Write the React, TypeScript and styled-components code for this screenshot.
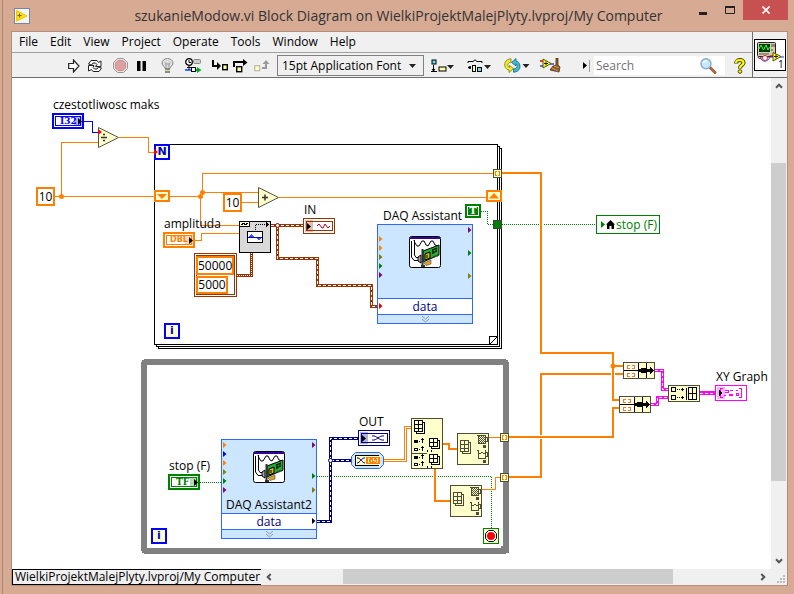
import React from "react";
import styled, { createGlobalStyle, css } from "styled-components";

const ORANGE = "#ff8000";
const BROWN = "#993300";
const NAVY = "#000080";
const PINK = "#ff00ff";
const GREEN = "#008000";
const CREAM = "#ffffcc";
const OLIVE = "#808000";
const PURPLE = "#800080";
const EDGE = "#4d4d33";
const CHROME = "#f0f0f0";

/* Scroll position of the diagram inside its pane. */
const ORIGIN_X = 12;
const ORIGIN_Y = 78;

const GlobalStyle = createGlobalStyle`
  *, *::before, *::after { box-sizing: border-box; }
  body {
    margin: 0;
    background: #d7aa93;
    color: #000;
    font: 12px/16px "Open Sans", "Noto Sans", sans-serif;
  }
  button, input, select {
    margin: 0;
    padding: 0;
    border: 0;
    background: none;
    color: inherit;
    font: inherit;
  }
  svg { display: block; flex: none; }
`;

/* ---------- window ---------- */

const Frame = styled.div`
  display: flex;
  flex-direction: column;
  min-height: 100vh;
  margin-left: 2px;
  padding: 0 6px 8px 8px;
  border-left: 1px solid #a98271;
`;

const TitleBar = styled.header`
  display: flex;
  align-items: center;
  height: 31px;
  padding-left: 3px;
`;

const Title = styled.h1`
  flex: 1;
  margin: 0;
  padding-left: 78px;
  text-align: center;
  font-size: 14px;
  line-height: 31px;
  font-weight: 400;
  color: #333;
  white-space: nowrap;
`;

const WindowButtons = styled.div`
  display: flex;
  align-self: flex-start;
`;

const WindowButton = styled.button<{ $close?: boolean }>`
  display: grid;
  place-items: center;
  width: ${(p) => (p.$close ? 45 : 27)}px;
  height: 20px;
  background: ${(p) => (p.$close ? "#c75050" : "transparent")};
`;

const Panel = styled.div`
  flex: 1;
  display: flex;
  flex-direction: column;
  border: 1px solid #b48e7d;
  background: ${CHROME};
`;

const Head = styled.div`
  display: flex;
  border-bottom: 1px solid #6e6e6e;
`;

const Bars = styled.div`
  flex: 1;
  min-width: 0;
`;

const MenuBar = styled.nav`
  display: flex;
  height: 20px;
  padding-left: 1px;
`;

const MenuItem = styled.button`
  padding: 0 6px 1px;
  line-height: 18px;
`;

const ToolBar = styled.div`
  display: flex;
  align-items: center;
  gap: 5px;
  height: 25px;
  padding: 1px 2px 0 51px;
  border-top: 1px solid #a0a0a0;
`;

const ToolGroup = styled.div<{ $gap?: number }>`
  display: flex;
  align-items: center;
  gap: ${(p) => p.$gap ?? 0}px;
`;

const ToolButton = styled.button<{ $wide?: boolean }>`
  display: grid;
  place-items: center;
  width: ${(p) => (p.$wide ? 27 : 21)}px;
  height: 20px;
`;

const FontBox = styled.label`
  position: relative;
  display: flex;
  align-items: center;
  width: 147px;
  height: 21px;
  border: 1px solid #808080;

  svg {
    position: absolute;
    right: 7px;
    pointer-events: none;
  }
`;

const FontSelect = styled.select`
  appearance: none;
  width: 100%;
  height: 100%;
  padding-left: 4px;
  line-height: 18px;
`;

const SearchGroup = styled.div`
  display: flex;
  align-items: center;
  margin-left: auto;
`;

const Divider = styled.span`
  width: 1px;
  height: 12px;
  margin: 0 4px 0 2px;
  background: #a0a0a0;
`;

const SearchBox = styled.label`
  display: flex;
  align-items: center;
  width: 131px;
  height: 19px;
  margin-right: 4px;
  padding: 0 8px 0 2px;
  background: #fff;
`;

const SearchInput = styled.input`
  flex: 1;
  min-width: 0;
  outline: 0;
  &::placeholder { color: #707070; opacity: 1; }
`;

const IconPane = styled.div`
  display: grid;
  place-items: center;
  width: 35px;
  border-left: 1px solid #6e6e6e;
`;

const Body = styled.div`
  flex: 1;
  display: flex;
`;

const Canvas = styled.main`
  position: relative;
  flex: 1;
  min-width: 0;
  min-height: 490px;
  overflow: hidden;
  background: #fff;
`;

const Scroll = styled.div<{ $vertical?: boolean }>`
  display: flex;
  flex-direction: ${(p) => (p.$vertical ? "column" : "row")};
  flex: ${(p) => (p.$vertical ? "none" : "1")};
  width: ${(p) => (p.$vertical ? "16px" : "auto")};
  padding: ${(p) => (p.$vertical ? "0 1px 0 0" : "0 0 1px")};
`;

const ScrollButton = styled.button`
  display: grid;
  place-items: center;
  width: 16px;
  height: 16px;
`;

const Space = styled.span<{ $part: number }>`
  flex: ${(p) => p.$part};
`;

const Thumb = styled.div<{ $part: number }>`
  flex: ${(p) => p.$part};
  background: #cdcdcd;
`;

const Foot = styled.footer`
  display: flex;
  height: 16px;
`;

const ProjectPath = styled.div`
  flex: none;
  padding: 0 1px 0 2px;
  border: 1px solid #000;
  border-right: 0;
  line-height: 13px;
  white-space: nowrap;
`;

/* ---------- diagram ---------- */

interface Place {
  $x: number;
  $y: number;
  $w?: number;
  $h?: number;
}

const placed = css<Place>`
  position: absolute;
  left: ${(p) => p.$x - ORIGIN_X}px;
  top: ${(p) => p.$y - ORIGIN_Y}px;
  width: ${(p) => (p.$w ? `${p.$w}px` : "auto")};
  height: ${(p) => (p.$h ? `${p.$h}px` : "auto")};
`;

const Layer = styled.svg`
  position: absolute;
  left: 0;
  top: 0;
`;

const Picture = styled.svg<Place>`
  ${placed}
`;

const Caption = styled.span<Place>`
  ${placed}
  line-height: 16px;
  white-space: nowrap;
`;

const Constant = styled.div<Place>`
  ${placed}
  display: grid;
  place-items: center;
  border: 2px solid ${ORANGE};
  background: #fff;
  line-height: 14px;
`;

const Cluster = styled.div<Place>`
  ${placed}
  border: 1px solid ${BROWN};
  background: #fff;
  outline: 1px solid ${BROWN};
  outline-offset: -3px;
`;

const TerminalBox = styled.div<Place & { $c: string; $thin?: boolean }>`
  ${placed}
  display: flex;
  padding: ${(p) => (p.$thin ? 2 : 1)}px;
  border: ${(p) => (p.$thin ? 1 : 2)}px solid ${(p) => p.$c};
  background: #fff;
  color: ${(p) => p.$c};
`;

const TerminalInner = styled.div<{ $serif?: boolean }>`
  flex: 1;
  display: flex;
  align-items: center;
  padding-left: ${(p) => (p.$serif ? 4 : 3)}px;
  border: 1px solid currentColor;
  font: 700 ${(p) => (p.$serif ? 9 : 8)}px/8px
    ${(p) => (p.$serif ? '"DejaVu Serif", serif' : '"DejaVu Sans", sans-serif')};
`;

const TerminalShade = styled.span<{ $left?: boolean }>`
  position: absolute;
  top: 1px;
  bottom: 1px;
  ${(p) => (p.$left ? "left: 1px" : "right: 0")};
  width: 8px;
  display: grid;
  place-items: center;
  justify-content: ${(p) => (p.$left ? "center" : "end")};

  &::before {
    content: "";
    position: absolute;
    inset: 0;
    background: currentColor;
    opacity: 0.3;
  }

  svg { position: relative; }
`;

const ExpressNode = styled.section<Place>`
  ${placed}
  display: flex;
  flex-direction: column;
  border: 1px solid #3366ff;
  background: #cce6ff;
`;

const ExpressTop = styled.div`
  flex: 1;
  display: flex;
  flex-direction: column;
  align-items: center;
  justify-content: space-between;
  padding-top: 11px;
`;

const ExpressRow = styled.div`
  height: 17px;
  border: solid #3366ff;
  border-width: 1px 0;
  background: #fff;
  color: ${NAVY};
  text-align: center;
  line-height: 16px;
`;

const ExpressFoot = styled.div`
  display: grid;
  place-items: center;
  height: 8px;
`;

const Pins = styled.svg`
  position: absolute;
  left: 0;
  top: 0;
`;

const Reference = styled.div<Place>`
  ${placed}
  display: flex;
  align-items: center;
  gap: 1px;
  padding-left: 4px;
  border: 1px solid ${GREEN};
  background: #fff;
  color: ${GREEN};
  white-space: nowrap;
`;

const LoopTerminal = styled.div<Place>`
  ${placed}
  display: grid;
  place-items: center;
  border: 2px solid #0000ff;
  background: ${CREAM};
  color: #0000cc;
  font: 700 11px/12px "DejaVu Sans", sans-serif;
`;

const TrueConstant = styled.div<Place>`
  ${placed}
  display: grid;
  place-items: center;
  border: 2px solid ${GREEN};
  outline: 1px solid #fff;
  outline-offset: -3px;
  background: ${GREEN};
  color: #fff;
  font: 700 10px/10px "DejaVu Serif", serif;
`;

/* ---------- small drawings ---------- */

const DownArrow = () => (
  <svg width="7" height="4" viewBox="0 0 7 4">
    <path d="M0 0H7L3.5 4Z" fill="#222" />
  </svg>
);

const PinArrow = ({ color = "#000" }: { color?: string }) => (
  <svg width="4" height="7" viewBox="0 0 4 7">
    <path d="M0 0L4 3.5L0 7Z" fill={color} />
  </svg>
);

const Chevron = ({ turn }: { turn: number }) => (
  <svg width="8" height="8" viewBox="0 0 8 8">
    <path d="M1 5.7L4 2.7L7 5.7" fill="none" stroke="#555" strokeWidth="2" transform={`rotate(${turn} 4 4)`} />
  </svg>
);

const DaqPicture = () => (
  <svg width="32" height="32" viewBox="0 0 32 32">
    <rect x=".5" y=".5" width="31" height="31" rx="2" fill="#fff" stroke="#000" />
    <path d="M1 2H31" stroke="#330099" strokeWidth="2" />
    <path d="M5 4L6 7L8 10H10L13 5H15L17 9L19 10L22 5H24L26 9L29 10" fill="none" stroke="#000" />
    <path d="M2.5 5V21L5 24.5H10M5.5 4V19L7 21.5H10" fill="none" stroke="#000" />
    <path d="M9 21L12 19V27L9 25Z" fill="#aaa" stroke="#000" />
    <path d="M14 15L30 9V19L14 26Z" fill="#22aa33" stroke="#000" />
    <path d="M13.5 13V30M12 30H16" stroke="#333" strokeWidth="2" />
    <path d="M16 18L21 16V22L16 24Z" fill="#d8b020" stroke="#000" />
    <path d="M18 19V22" stroke="#000" />
    <path d="M23 14L28 12M23 17L28 15M24 13V18M27 12V16" stroke="#000" />
    <path d="M15 27L22 24V28L17 29.500Z" fill="#e0a020" stroke="#333" strokeWidth=".5" />
    <path d="M24 21L30 19" stroke="#444" strokeDasharray="1 1" strokeWidth="2" />
  </svg>
);

const ChevronPair = () => (
  <svg width="9" height="7" viewBox="0 0 9 7">
    <path d="M1 0L4.500 3L8 0M1 3L4.500 6L8 3" fill="none" stroke="#8899aa" />
  </svg>
);

type Pin = [number, string];

const NodePins = ({ left, right, height }: { left: Pin[]; right: Pin[]; height: number }) => (
  <Pins width="94" height={height} viewBox={`0 0 94 ${height}`}>
    {left.map(([y, c]) => (
      <path key={`l${y}`} d={`M1 ${y - 3}L4.500 ${y}L1 ${y + 3}Z`} fill={c} />
    ))}
    {right.map(([y, c]) => (
      <path key={`r${y}`} d={`M90 ${y - 3}L93.500 ${y}L90 ${y + 3}Z`} fill={c} />
    ))}
  </Pins>
);

const Wire = ({ d, c, w = 1 }: { d: string; c: string; w?: number }) => (
  <path d={d} fill="none" stroke={c} strokeWidth={w} />
);

const BandWire = ({ d, c, w = 3, dash = "2 2" }: { d: string; c: string; w?: number; dash?: string }) => (
  <>
    <path d={d} fill="none" stroke={c} strokeWidth={w} />
    <path d={d} fill="none" stroke="#fff" strokeDasharray={dash} />
  </>
);

const Grid3 = ({ x, y, c = "#000" }: { x: number; y: number; c?: string }) => (
  <path
    d={`M${x + 0.5} ${y + 0.5}h8v11h-8ZM${x + 4.5} ${y + 0.5}v11M${x + 0.5} ${y + 4.5}h8M${x + 0.5} ${y + 8.5}h8M${x + 8.5} ${y + 2.5}h2v11h-8v-2`}
    fill="none"
    stroke={c}
  />
);

const Grid2 = ({ x, y }: { x: number; y: number }) => (
  <path
    d={`M${x + 0.5} ${y + 0.5}h8v8h-8ZM${x + 4.5} ${y + 0.5}v8M${x + 0.5} ${y + 4.5}h8M${x + 8.5} ${y + 2.5}h2v8h-8v-2`}
    fill="none"
    stroke="#000"
  />
);

const BracketTunnel = ({ x, y }: { x: number; y: number }) => (
  <Picture $x={x} $y={y} $w={9} $h={9} viewBox="0 0 9 9" shapeRendering="crispEdges">
    <rect x=".5" y=".5" width="8" height="8" fill={CREAM} stroke={EDGE} />
    <path d="M4 2.500H2.500V6.500H4M5 2.500H6.500V6.500H5" fill="none" stroke={ORANGE} />
  </Picture>
);

const ShiftRegister = ({ x, y, up }: { x: number; y: number; up?: boolean }) => (
  <Picture $x={x} $y={y} $w={16} $h={12} viewBox="0 0 16 12">
    <rect x="1" y="1" width="14" height="10" fill={CREAM} stroke={ORANGE} strokeWidth="2" />
    <path d={up ? "M3 8.500H13L8 3Z" : "M3 4H13L8 9Z"} fill={ORANGE} />
  </Picture>
);

const Operator = ({ x, y, sign }: { x: number; y: number; sign: "add" | "divide" }) => (
  <Picture $x={x} $y={y} $w={21} $h={21} viewBox="0 0 21 21">
    <path d="M.5 .5L20.500 10.500L.5 20.500Z" fill={CREAM} stroke="#555540" />
    {sign === "add" ? (
      <path d="M4 10.500H10M7 7.500V13.500" stroke="#333" strokeWidth="1.500" />
    ) : (
      <path d="M3 10.500H9M5 7.500H7M5 13.500H7" stroke="#333" strokeWidth="1.500" />
    )}
  </Picture>
);

const Bundle = ({ x, y }: { x: number; y: number }) => (
  <Picture $x={x} $y={y} $w={32} $h={17} viewBox="0 0 32 17" shapeRendering="crispEdges">
    <rect x=".5" y=".5" width="31" height="16" fill={CREAM} stroke={EDGE} />
    <rect x="1" y="1" width="14" height="15" fill="#fff" />
    <path d="M1 8.500H15M15.500 1V16M23.500 1V16" stroke="#000" fill="none" />
    <path d="M7 3.500H4.500V6.500H7M9 3.500H11.500V6.500H9M7 11.500H4.500V14.500H7M9 11.500H11.500V14.500H9" stroke={ORANGE} fill="none" />
    <path d="M16 7H18V6H23V7H27V5L31 8.500L27 12V10H23V11H18V10H16Z" fill="#000" />
  </Picture>
);

const IndexNode = ({ x, y }: { x: number; y: number }) => (
  <Picture $x={x} $y={y} $w={32} $h={32} viewBox="0 0 32 32" shapeRendering="crispEdges">
    <rect x=".5" y=".5" width="31" height="31" fill={CREAM} stroke={EDGE} />
    <Grid3 x={3} y={7} c={EDGE} />
    <path d="M20 2.500H28.500V10.500H21.500V3M28.500 4.500H30.500V8.500H28.500" fill="none" stroke={EDGE} />
    <path d="M22 3.500H28M22 5.500H28M22 7.500H28M22 9.500H28" stroke={EDGE} strokeDasharray="1 1" />
    <path d="M23 4.500H28M23 6.500H28M23 8.500H28" stroke={EDGE} strokeDasharray="1 1" />
    <path d="M20 17.500H22M21.500 18V25.500H28.500V17M28.500 19.500H30.500V23.500H28.500M22 20.500H24M24 19.500H26M26 20.500H28" fill="none" stroke={EDGE} />
    <path d="M26 12H29V15H26ZM26 27H29V30H26Z" fill={EDGE} />
  </Picture>
);

interface TerminalProps {
  x: number;
  y: number;
  c: string;
  text?: string;
  serif?: boolean;
  indicator?: boolean;
  children?: React.ReactNode;
}

const Terminal = ({ x, y, c, text, serif, indicator, children }: TerminalProps) => (
  <TerminalBox $x={x} $y={y} $w={32} $h={16} $c={c} $thin={indicator}>
    <TerminalInner $serif={serif}>
      {text}
      {children}
    </TerminalInner>
    <TerminalShade $left={indicator}>
      <PinArrow />
    </TerminalShade>
  </TerminalBox>
);

/* ---------- diagram wiring ---------- */

const Wiring = () => (
  <Layer width="759" height="490" viewBox={`${ORIGIN_X} ${ORIGIN_Y} 759 490`} shapeRendering="crispEdges">
    {/* for loop, stacked pages */}
    <path d="M158.500 346V348.500H501.500V148.500H500M156.500 344V346.500H499.500V146.500H498" fill="none" stroke="#000" />
    <rect x="154.500" y="144.500" width="343" height="200" fill="#fff" stroke="#000" />
    <path d="M489.500 344V336.500H497M490 344L497 337" fill="none" stroke="#000" />
    {/* while loop */}
    <rect x="144" y="362" width="362" height="189" rx="2" fill="none" stroke="#808080" strokeWidth="6" />
    <path d="M501 546H509V553H506V551H501Z" fill="#808080" />

    <Wire c="#0000ff" d="M84 121.500H92.500V132.500H98" />
    <Wire c={ORANGE} d="M119 137.500H148.500V152.500H155" />
    <Wire c={ORANGE} d="M55 196.500H201M61.500 196V142.500H98M200.500 196V225.500H239" />
    <Wire c={ORANGE} d="M202.500 192V173.500H493M202 192.500H258M242 202.500H258M279 197.500H487" />
    <Wire c={ORANGE} d="M195 240.500H201.500V233.500H239" />
    <g fill={ORANGE} shapeRendering="auto">
      <circle cx="61.500" cy="196.500" r="2.500" />
      <circle cx="200.500" cy="196.500" r="2.500" />
      <circle cx="202.500" cy="192.500" r="2.500" />
    </g>

    <BandWire c={BROWN} d="M237 275.500H251.500V253" dash="1 1" />
    <BandWire c={BROWN} d="M271 225.500H303" dash="3 2" />
    <BandWire c={BROWN} d="M277.500 226V258.500H317.500V285.500H371.500V306.500H378" dash="3 2" />
    <circle cx="277.500" cy="225.500" r="2" fill="#fff" stroke="#990000" shapeRendering="auto" />

    <g strokeDasharray="1 1">
      <Wire c={GREEN} d="M481 211.500H487.500V224.500H493M502 224.500H539M544 224.500H596" />
      <Wire c={GREEN} d="M200 482.500H221M317 476.500H328M334 476.500H433M438 476.500H491.500V528" />
    </g>

    <Wire c={ORANGE} w={2} d="M502 173H541V353H613V400H619M613 366H623" />
    <Wire c={ORANGE} w={2} d="M509 437H613V408H619M509 477H541V439M541 435V374H611M615 374H623" />
    <circle cx="613" cy="366" r="2.500" fill={ORANGE} shapeRendering="auto" />
    <Wire c={ORANGE} w={2} d="M443 444H449V449H457M435 469V501H450" />
    <Wire c={ORANGE} d="M489 437.500H500M482 489.500H495.500V477.500H500" />
    <Wire c={ORANGE} w={3} d="M384 460.500H405.500V427.500H411" />
    <Wire c="#fff" d="M384 460.500H405.500V427.500H411" />

    <BandWire c={NAVY} d="M317 521.500H330.500V438.500H358M331 460.500H352" dash="3 2" />
    <circle cx="330.500" cy="460.500" r="2" fill="#fff" stroke={NAVY} shapeRendering="auto" />

    <BandWire c={PINK} d="M655 370.500H662.500V389.500H668M651 404.500H657.500V397.500H668" dash="3 2" />
    <BandWire c={PINK} w={4} d="M700 393H715" dash="3 2" />
  </Layer>
);

/* ---------- toolbar drawings ---------- */

const RunIcon = () => (
  <svg width="12" height="14" viewBox="0 0 12 14">
    <path d="M.7 4.500H5.500V1L11 7L5.500 13V9.500H.7Z" fill="#fff" stroke="#222" strokeWidth="1.200" />
  </svg>
);

const RunLoopIcon = () => (
  <svg width="16" height="14" viewBox="0 0 16 14">
    <path d="M1.500 5L4 1.500H10L11.500 3.500L14 2V7.500H8.500L10 5.500L8.500 4H6L4.500 6Z" fill="#fff" stroke="#222" />
    <path d="M14.500 9L12 12.500H6L4.500 10.500L1.500 12V6.500H7L6 8.500L7.500 10H10L11.500 8Z" fill="#fff" stroke="#222" />
  </svg>
);

const AbortIcon = () => (
  <svg width="15" height="15" viewBox="0 0 15 15">
    <path d="M4.500 .5H10.500L14.500 4.500V10.500L10.500 14.500H4.500L.5 10.500V4.500Z" fill="#e8e0e0" stroke="#999" />
    <path d="M5 2.500H10L12.500 5V10L10 12.500H5L2.500 10V5Z" fill="#dda0a0" stroke="#d09090" />
  </svg>
);

const PauseIcon = () => (
  <svg width="9" height="10" viewBox="0 0 9 10">
    <path d="M0 0H3.500V10H0ZM5.500 0H9V10H5.500Z" fill="#000" />
  </svg>
);

const BulbIcon = () => (
  <svg width="13" height="16" viewBox="0 0 13 16">
    <path d="M4 10.500C4 8.500 1 8 1 5A5.500 4.500 0 0 1 12 5C12 8 9 8.500 9 10.500Z" fill="#ddd" stroke="#888" />
    <path d="M5 10V6L4 4.500M8 10V6L9 4.500M5 6H8" fill="none" stroke="#999" />
    <path d="M4 11H9V15H4Z" fill="#8c8c80" />
    <path d="M4 12.500H9" stroke="#e0d890" />
  </svg>
);

const RetainIcon = () => (
  <svg width="17" height="15" viewBox="0 0 17 15">
    <circle cx="4" cy="4" r="3.300" fill="#fff" stroke="#000" strokeWidth="1.300" />
    <path d="M4 2V4.500H6M4 7.500V12M2 9.500H6" fill="none" stroke="#000" />
    <rect x="8.500" y="1.500" width="7" height="4" rx="1" fill="#ccc" stroke="#888" />
    <path d="M0 12H6" stroke="#0044ff" strokeWidth="1.500" />
    <rect x="6.500" y="9.500" width="4" height="4" fill="#fff" stroke="#000" />
    <path d="M11 11H12V9L16.500 12L12 15V13H11Z" fill="#00aa22" />
  </svg>
);

const StepIntoIcon = () => (
  <svg width="16" height="13" viewBox="0 0 16 13">
    <path d="M1 1V7H6" fill="none" stroke="#000" strokeWidth="2" />
    <path d="M5 3L9 7L5 11Z" fill="#000" />
    <rect x="10.700" y="5.700" width="4.600" height="5" fill="#ffff99" stroke="#000" strokeWidth="1.400" />
  </svg>
);

const StepOverIcon = () => (
  <svg width="15" height="14" viewBox="0 0 15 14">
    <path d="M1 8V3H11" fill="none" stroke="#000" strokeWidth="2" />
    <path d="M10 0L14.500 3.500L10 7Z" fill="#000" />
    <rect x="3.700" y="7.700" width="5" height="5" fill="#ffff99" stroke="#000" strokeWidth="1.400" />
  </svg>
);

const StepOutIcon = () => (
  <svg width="16" height="13" viewBox="0 0 16 13">
    <rect x=".7" y="6.700" width="5" height="5" fill="#ffffcc" stroke="#bbb9a0" strokeWidth="1.200" />
    <path d="M8 9H12V4" fill="none" stroke="#999" strokeWidth="2" />
    <path d="M8.500 5L12 1L15.500 5Z" fill="#999" />
  </svg>
);

const AlignIcon = () => (
  <svg width="24" height="14" viewBox="0 0 24 14">
    <rect x="1" y="1" width="4" height="4" fill="#66ddee" stroke="#000" />
    <path d="M2.500 6V12M1 10L2.500 12L4 10M0 12.500H6" fill="none" stroke="#000" />
    <rect x="8" y="8" width="7" height="4" fill="#ffff99" stroke="#000" />
    <path d="M16 6H23L19.500 10Z" fill="#222" />
  </svg>
);

const DistributeIcon = () => (
  <svg width="25" height="14" viewBox="0 0 25 14">
    <path d="M1 4V2.500H6L8 .8L10 2.500H15V4" fill="none" stroke="#000" />
    <path d="M1 8.500H4M3 7V10" stroke="#000" strokeWidth="1.500" />
    <rect x="5.500" y="6.500" width="3" height="6" fill="#ffff99" stroke="#000" />
    <rect x="10.500" y="8.500" width="4" height="4" fill="#66ddee" stroke="#000" />
    <path d="M17 6H24L20.500 10Z" fill="#222" />
  </svg>
);

const ReorderIcon = () => (
  <svg width="26" height="15" viewBox="0 0 26 15">
    <path d="M7 .8C-1 1 -1 11 5 12V14.500L9.500 10.500L5.500 7.500V9.500C3 8 3 5 7 4Z" fill="#f2ec30" stroke="#777700" strokeWidth=".8" />
    <path d="M9.500 14.200C18 14 17.500 4 12 3V.5L7.500 4.500L12 8V5.800C14 7 14 10 9.500 11Z" fill="#44b8cc" stroke="#116688" strokeWidth=".8" />
    <path d="M18.500 6H25.500L22 10Z" fill="#222" />
  </svg>
);

const CleanupIcon = () => (
  <svg width="22" height="15" viewBox="0 0 22 15">
    <path d="M0 3H3" stroke="#dd0000" strokeWidth="1.500" />
    <path d="M0 8H3M10 6H14" stroke="#3344dd" strokeWidth="1.500" />
    <path d="M3 1L11 5.500L3 10Z" fill="#ffff33" stroke="#665500" />
    <path d="M4 5.500H8M6 3.500V7.500" stroke="#222" />
    <path d="M16 0H18V7L20 9L19 14L10 12L13 8L16 7Z" fill="#8b5a2b" stroke="#553311" strokeWidth=".8" />
    <path d="M12 10L18 13M14 8L19 10" stroke="#d0a060" />
  </svg>
);

const LensIcon = () => (
  <svg width="17" height="16" viewBox="0 0 17 16">
    <path d="M10 9.500L15 14.500" stroke="#a8643c" strokeWidth="3" strokeLinecap="round" />
    <circle cx="6" cy="5.800" r="5" fill="#c8e8fc" stroke="#86a8cc" strokeWidth="1.400" />
    <path d="M3 5Q4 2.500 7 3" fill="none" stroke="#fff" strokeWidth="1.500" />
  </svg>
);

const HelpIcon = () => (
  <svg width="12" height="16" viewBox="0 0 12 16">
    <path d="M2 5.500C2 1 10 1 9.500 5C9.200 7.500 6 7 6 10.500" fill="none" stroke="#444400" strokeWidth="4" />
    <path d="M2 5C2 1 10 1 9.500 5C9.200 7.500 6 7 6 10" fill="none" stroke="#ffff00" strokeWidth="2.200" />
    <circle cx="6" cy="13.500" r="1.800" fill="#ffff00" stroke="#444400" />
  </svg>
);

const ViIcon = () => (
  <svg width="32" height="32" viewBox="0 0 32 32">
    <rect x=".5" y=".5" width="31" height="31" fill="#fff" stroke="#000" />
    <rect x="3.500" y="3.500" width="18" height="14" rx="1" fill="#d5ceb0" stroke="#222" />
    <rect x="5" y="5" width="11" height="8" fill="#003c00" />
    <path d="M5 10L7 6L9.500 11L12 6L14 11L15.500 8" fill="none" stroke="#33ff44" />
    <path d="M18 5V8M20 5V8M18 10V12" stroke="#444" />
    <path d="M5 15H15" stroke="#555" />
    <path d="M4 18C5 22 8 17 11 19S15 15 19 17" fill="none" stroke="#dd0000" />
    <path d="M6 18C8 24 14 23 16 18H19M26 18H30" fill="none" stroke="#2233cc" />
    <circle cx="11" cy="19" r="2.500" fill="#fff" stroke="#cc3333" />
    <path d="M19 13.500L27 17.500L19 22Z" fill="#ffff33" stroke="#555500" />
    <path d="M20 17.500H24M22 15.500V19.500" stroke="#222" />
    <text x="24" y="29" fontFamily="Open Sans, sans-serif" fontSize="10">1</text>
  </svg>
);

const LabviewIcon = () => (
  <svg width="16" height="16" viewBox="0 0 16 16">
    <rect x=".5" y=".5" width="15" height="15" fill="#f4f4f4" stroke="#788898" />
    <path d="M2.500 2.500L13 8L2.500 13Z" fill="#ffe000" stroke="#f0c800" />
    <path d="M3.500 7.500H7.500M5.500 5.500V9.500" stroke="#666" />
  </svg>
);

/* ---------- page ---------- */

const MENUS = ["File", "Edit", "View", "Project", "Operate", "Tools", "Window", "Help"];

const TOOL_GROUPS: { name: string; icon: React.ReactNode }[][] = [
  [
    { name: "Run", icon: <RunIcon /> },
    { name: "Run continuously", icon: <RunLoopIcon /> },
  ],
  [
    { name: "Abort", icon: <AbortIcon /> },
    { name: "Pause", icon: <PauseIcon /> },
  ],
  [{ name: "Highlight execution", icon: <BulbIcon /> }],
  [{ name: "Retain wire values", icon: <RetainIcon /> }],
  [
    { name: "Step into", icon: <StepIntoIcon /> },
    { name: "Step over", icon: <StepOverIcon /> },
    { name: "Step out", icon: <StepOutIcon /> },
  ],
];

const ARRANGE = [
  { name: "Align objects", wide: true, icon: <AlignIcon /> },
  { name: "Distribute objects", wide: true, icon: <DistributeIcon /> },
  { name: "Reorder", wide: true, icon: <ReorderIcon /> },
  { name: "Clean up diagram", wide: false, icon: <CleanupIcon /> },
];

const Diagram = () => (
  <Canvas>
    <Wiring />

    <Caption $x={53} $y={97}>czestotliwosc maks</Caption>
    <Terminal x={52} y={113} c="#0000ff" text="I32" serif />
    <Operator x={98} y={127} sign="divide" />
    <LoopTerminal $x={154} $y={144} $w={16} $h={16}>N</LoopTerminal>
    <Picture $x={98} $y={129} $w={4} $h={6} viewBox="0 0 4 6">
      <path d="M0 0L4 3L0 6Z" fill="red" />
    </Picture>
    <Picture $x={154} $y={149} $w={4} $h={6} viewBox="0 0 4 6">
      <path d="M0 0L4 3L0 6Z" fill="red" />
    </Picture>
    <Constant $x={36} $y={187} $w={19} $h={19}>10</Constant>
    <ShiftRegister x={154} y={190} />
    <ShiftRegister x={486} y={190} up />
    <Constant $x={223} $y={193} $w={19} $h={19}>10</Constant>
    <Operator x={258} y={187} sign="add" />
    <BracketTunnel x={493} y={169} />

    <Caption $x={164} $y={216}>amplituda</Caption>
    <Terminal x={163} y={232} c={ORANGE} text="DBL" />
    <Picture $x={239} $y={221} $w={32} $h={32} viewBox="0 0 32 32" shapeRendering="crispEdges">
      <rect x=".5" y=".5" width="31" height="31" fill="#d9d9d9" stroke="#000" />
      <path d="M.5 .5H10.500V5.500H.5Z" fill={CREAM} stroke="#000" />
      <path d="M2 3.500H3V2.500H5V3.500H7V2.500H9" fill="none" stroke="#000" />
      <path d="M16.500 9V3.500H28" fill="none" stroke="#000" strokeDasharray="1 1" />
      <path d="M27 1L30 3.500L27 6Z" fill="#000" />
      <rect x="8.500" y="10.500" width="15" height="11" fill="#fff" stroke="#000" />
      <path d="M9 16L12 13L16 16L20 19L23 16Z" fill="#3355ff" />
      <path d="M9 16.500H23" stroke="#0000cc" />
    </Picture>
    <Caption $x={304} $y={202}>IN</Caption>
    <Terminal x={303} y={218} c={BROWN} indicator>
      <svg width="22" height="8" viewBox="0 0 22 8">
        <path d="M7 4L9 2L12 6H13L15 2L18 6L20 4" fill="none" stroke="#aa0022" />
      </svg>
    </Terminal>
    <Cluster $x={194} $y={253} $w={43} $h={44} />
    <Constant $x={196} $y={256} $w={38} $h={19}>50000</Constant>
    <Constant $x={196} $y={276} $w={32} $h={18}>5000</Constant>
    <LoopTerminal $x={164} $y={323} $w={16} $h={16}>i</LoopTerminal>

    <Caption $x={383} $y={208}>DAQ Assistant</Caption>
    <ExpressNode $x={377} $y={224} $w={96} $h={100}>
      <ExpressTop>
        <DaqPicture />
      </ExpressTop>
      <ExpressRow>data</ExpressRow>
      <ExpressFoot>
        <ChevronPair />
      </ExpressFoot>
      <NodePins
        height={98}
        left={[[14, ORANGE], [23, ORANGE], [32, OLIVE], [41, GREEN], [50, PURPLE], [81, "#dd0000"]]}
        right={[[5, PURPLE], [28, GREEN], [51, OLIVE]]}
      />
    </ExpressNode>
    <TrueConstant $x={465} $y={204} $w={16} $h={14}>T</TrueConstant>
    <Picture $x={493} $y={220} $w={9} $h={9} viewBox="0 0 9 9">
      <rect x=".5" y=".5" width="8" height="8" fill={GREEN} stroke="#404040" />
    </Picture>
    <Reference $x={596} $y={215} $w={64} $h={19}>
      <PinArrow color={GREEN} />
      <svg width="9" height="9" viewBox="0 0 9 9">
        <path d="M4.500 0L9 4.500H8V9H5.500V6H3.500V9H1V4.500H0Z" fill="#000" />
      </svg>
      stop (F)
    </Reference>

    <Bundle x={623} y={362} />
    <Bundle x={619} y={396} />
    <Picture $x={668} $y={385} $w={32} $h={17} viewBox="0 0 32 17" shapeRendering="crispEdges">
      <rect x=".5" y=".5" width="31" height="16" fill={CREAM} stroke={EDGE} />
      <path d="M3.500 2.500H7.500V6.500H3.500ZM3.500 10.500H7.500V14.500H3.500ZM20 2.500H28.500V14.500H20.500V2.500M24.500 2V15M20 8.500H28M18.500 3V15M14.500 3V6M14.500 11V14M13 4.500H16M13 12.500H16" fill="none" stroke="#000" />
      <path d="M9 4.500H13M9 12.500H13" stroke="#000" strokeDasharray="1 1" />
    </Picture>
    <Caption $x={716} $y={369}>XY Graph</Caption>
    <Picture $x={715} $y={385} $w={32} $h={16} viewBox="0 0 32 16" shapeRendering="crispEdges">
      <rect x=".5" y=".5" width="31" height="15" fill="#fff" stroke={PINK} />
      <rect x="2" y="2" width="8" height="12" fill="#ffb0ff" />
      <path d="M8 3.500H5.500V12.500H8M24 3.500H26.500V12.500H24M10 5.500H13V7.500H10M15 5.500H18M21 5.500H23M9 10.500H11M21.500 8.500H23.500V10.500H21.500Z" fill="none" stroke={PINK} />
      <path d="M14 9H18V11H14Z" fill={PINK} />
      <path d="M4 5L8 8L4 11Z" fill="#000" />
    </Picture>

    <Caption $x={169} $y={458}>stop (F)</Caption>
    <Terminal x={168} y={474} c={GREEN} text="TF" serif />
    <ExpressNode $x={221} $y={439} $w={96} $h={100}>
      <ExpressTop>
        <DaqPicture />
        <span>DAQ Assistant2</span>
      </ExpressTop>
      <ExpressRow>data</ExpressRow>
      <ExpressFoot>
        <ChevronPair />
      </ExpressFoot>
      <NodePins
        height={98}
        left={[[5, ORANGE], [14, "#0000ff"], [23, ORANGE], [32, OLIVE], [41, GREEN], [50, PURPLE]]}
        right={[[5, PURPLE], [36, GREEN], [50, OLIVE], [81, "#000"]]}
      />
    </ExpressNode>
    <LoopTerminal $x={151} $y={528} $w={16} $h={16}>i</LoopTerminal>

    <Caption $x={359} $y={414}>OUT</Caption>
    <Terminal x={358} y={430} c={NAVY} indicator>
      <svg width="22" height="8" viewBox="0 0 22 8">
        <path d="M7 2C12 1 14 7 19 6M7 6C12 7 14 1 19 2" fill="none" stroke={NAVY} />
      </svg>
    </Terminal>
    <Picture $x={351} $y={452} $w={33} $h={17} viewBox="0 0 33 17">
      <path d="M4.500 .5H28.500L32.500 4.500V12.500L28.500 16.500H4.500L.5 12.500V4.500Z" fill="#cce6ff" stroke="#3366dd" />
      <rect x="4" y="4" width="25" height="10" fill={CREAM} />
      <path d="M4 3.500H28M4 13.500H28M4.500 4V13" stroke="#000" />
      <path d="M6 6C9 5 11 11 14 11M6 11C9 11 11 5 14 6" fill="none" stroke={NAVY} />
      <rect x="15" y="5" width="14" height="7" fill={ORANGE} />
      <path d="M18.500 6.500H17.500V10.500H18.500M25.500 6.500H26.500V10.500H25.500M20.500 8V10M22.500 6V9M24 8V10" fill="none" stroke={CREAM} />
    </Picture>
    <Picture $x={411} $y={418} $w={32} $h={51} viewBox="0 0 32 51" shapeRendering="crispEdges">
      <rect x=".5" y=".5" width="31" height="50" fill={CREAM} stroke={EDGE} />
      <Grid3 x={3} y={2} />
      <Grid2 x={18} y={20} />
      <Grid2 x={18} y={36} />
      <path d="M1 35.500H16" stroke={EDGE} />
      <path d="M3 22H7V25H3ZM3 38H7V41H3Z" fill="#000" />
      <path d="M3.500 30.500H6.500V32.500H3.500ZM3.500 45.500H6.500V47.500H3.500ZM11.500 20V25M10 21.500H13M8 23.500H9M11.500 28V33M10 29.500H13M8 31.500H9M11.500 36V41M10 37.500H13M8 39.500H9M11.500 43V48M10 44.500H13M8 46.500H9M16.500 32V34M20.500 32V34M16.500 48V50M20.500 48V50" fill="none" stroke="#000" />
    </Picture>
    <IndexNode x={457} y={433} />
    <IndexNode x={450} y={485} />
    <BracketTunnel x={500} y={433} />
    <BracketTunnel x={500} y={473} />
    <Picture $x={483} $y={528} $w={16} $h={16} viewBox="0 0 16 16">
      <rect x=".5" y=".5" width="15" height="15" fill={CREAM} stroke={GREEN} />
      <path d="M5.500 2.500H10.500L13.500 5.500V10.500L10.500 13.500H5.500L2.500 10.500V5.500Z" fill="#fff" stroke="#000" />
      <circle cx="8" cy="8" r="4" fill="red" />
    </Picture>
  </Canvas>
);

export default function App() {
  return (
    <>
      <GlobalStyle />
      <Frame>
        <TitleBar>
          <LabviewIcon />
          <Title>szukanieModow.vi Block Diagram on WielkiProjektMalejPlyty.lvproj/My Computer</Title>
          <WindowButtons>
            <WindowButton aria-label="Minimize">
              <svg width="8" height="10" viewBox="0 0 8 10"><path d="M0 8.500H8" stroke="#222" strokeWidth="3" /></svg>
            </WindowButton>
            <WindowButton aria-label="Maximize">
              <svg width="10" height="8" viewBox="0 0 10 8"><path d="M.5 1H9.500V7.500H.5Z" fill="none" stroke="#222" /><path d="M0 1H10" stroke="#222" strokeWidth="2" /></svg>
            </WindowButton>
            <WindowButton $close aria-label="Close">
              <svg width="8" height="8" viewBox="0 0 8 8"><path d="M.5 .5L7.500 7.500M7.500 .5L.5 7.500" stroke="#fff" strokeWidth="1.600" /></svg>
            </WindowButton>
          </WindowButtons>
        </TitleBar>

        <Panel>
          <Head>
            <Bars>
              <MenuBar>
                {MENUS.map((m) => (
                  <MenuItem key={m}>{m}</MenuItem>
                ))}
              </MenuBar>
              <ToolBar>
                {TOOL_GROUPS.map((group) => (
                  <ToolGroup key={group[0].name}>
                    {group.map((t) => (
                      <ToolButton key={t.name} aria-label={t.name}>{t.icon}</ToolButton>
                    ))}
                  </ToolGroup>
                ))}
                <FontBox>
                  <FontSelect aria-label="Text settings" defaultValue="15pt Application Font">
                    <option>15pt Application Font</option>
                  </FontSelect>
                  <DownArrow />
                </FontBox>
                <ToolGroup $gap={10}>
                  {ARRANGE.map((t) => (
                    <ToolButton key={t.name} $wide={t.wide} aria-label={t.name}>{t.icon}</ToolButton>
                  ))}
                </ToolGroup>
                <SearchGroup>
                  <PinArrow />
                  <Divider />
                  <SearchBox>
                    <SearchInput aria-label="Search" placeholder="Search" />
                    <LensIcon />
                  </SearchBox>
                  <ToolButton aria-label="Context help"><HelpIcon /></ToolButton>
                </SearchGroup>
              </ToolBar>
            </Bars>
            <IconPane>
              <ViIcon />
            </IconPane>
          </Head>

          <Body>
            <Diagram />
            <Scroll $vertical>
              <ScrollButton aria-label="Scroll up"><Chevron turn={0} /></ScrollButton>
              <Space $part={69} />
              <Thumb $part={318} />
              <Space $part={72} />
              <ScrollButton aria-label="Scroll down"><Chevron turn={180} /></ScrollButton>
            </Scroll>
          </Body>

          <Foot>
            <ProjectPath>WielkiProjektMalejPlyty.lvproj/My Computer</ProjectPath>
            <Scroll>
              <ScrollButton aria-label="Scroll left"><Chevron turn={270} /></ScrollButton>
              <Space $part={66} />
              <Thumb $part={330} />
              <Space $part={82} />
              <ScrollButton aria-label="Scroll right"><Chevron turn={90} /></ScrollButton>
            </Scroll>
            <svg width="16" height="16" viewBox="0 0 16 16">
              <path d="M12 6H14V8H12ZM9 9H11V11H9ZM12 9H14V11H12ZM6 12H8V14H6ZM9 12H11V14H9ZM12 12H14V14H12Z" fill="#bbb" />
            </svg>
          </Foot>
        </Panel>
      </Frame>
    </>
  );
}
